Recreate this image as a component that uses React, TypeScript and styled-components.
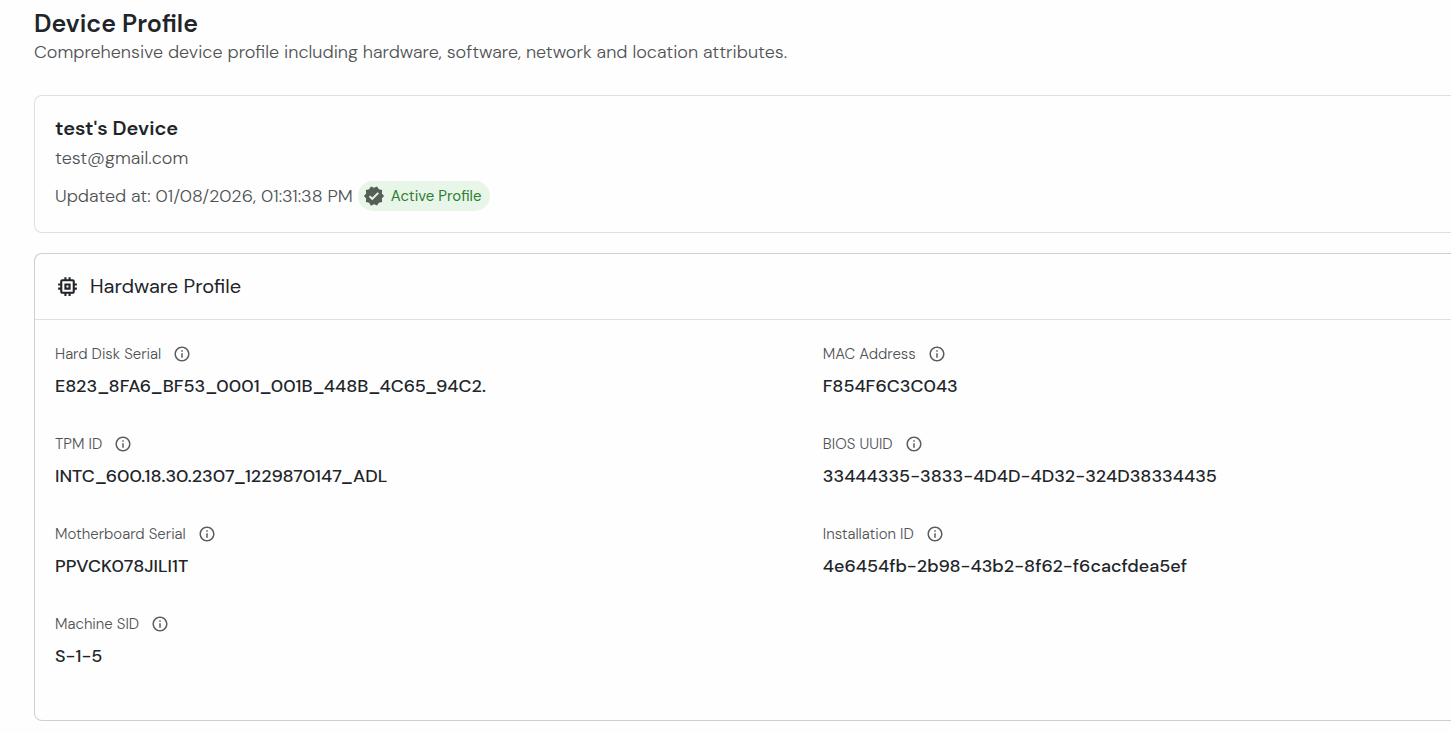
import React from "react";
import styled, { createGlobalStyle } from "styled-components";
import { MdInfoOutline, MdMemory, MdVerified } from "react-icons/md";

const GlobalStyle = createGlobalStyle`
  * { box-sizing: border-box; }
  body {
    margin: 0;
    background: #fefefe;
    color: #212529;
    font-family: "DM Sans", Inter, "Liberation Sans", sans-serif;
  }
  h1, h2, p, dl, dd { margin: 0; }
`;

const Page = styled.main`
  padding: 9px 0 12px 34px;
`;

const PageHeader = styled.header`
  display: flex;
  flex-direction: column;
  gap: 1px;
  margin-bottom: 31px;
`;

const PageTitle = styled.h1`
  font-size: 25px;
  line-height: 30px;
  font-weight: 600;
`;

const Text = styled.p`
  font-size: 18px;
  line-height: 24px;
  font-weight: 300;
  color: #505254;
`;

const Card = styled.section<{ $tone: string }>`
  border: 1px solid ${(p) => p.$tone};
  border-right: 0;
  border-radius: 8px 0 0 8px;
`;

const DeviceCard = styled(Card)`
  padding: 20px 20px 22px;
  margin-bottom: 20px;
`;

const DeviceName = styled.h2`
  font-size: 20px;
  line-height: 24px;
  font-weight: 600;
  margin-bottom: 6px;
`;

const StatusRow = styled.div`
  display: flex;
  align-items: center;
  gap: 5px;
  height: 28px;
  margin-top: 12px;
`;

const Badge = styled.span`
  display: inline-flex;
  align-items: center;
  gap: 6px;
  height: 30px;
  padding: 0 9px 0 5px;
  border-radius: 15px;
  background: #e8f5e9;
  color: #2e7d32;
  font-size: 15px;
  line-height: 20px;

  svg { color: #555f56; }
`;

const SectionHeader = styled.header`
  display: flex;
  align-items: center;
  gap: 10px;
  height: 66px;
  padding: 0 20px;
  border-bottom: 1px solid #e0e0e0;
`;

const SectionTitle = styled.h2`
  font-size: 20px;
  line-height: 25px;
  font-weight: 400;
`;

const FieldGrid = styled.dl`
  display: grid;
  grid-template-columns: 11fr 9fr;
  row-gap: 36px;
  padding: 24px 0 52px 20px;
`;

const FieldLabel = styled.dt`
  display: flex;
  align-items: center;
  gap: 12px;
  margin-bottom: 10px;
  font-size: 15px;
  line-height: 20px;
  font-weight: 300;
  color: #505254;
`;

const FieldValue = styled.dd`
  font-size: 18px;
  line-height: 24px;
  font-weight: 500;
`;

const InfoButton = styled.button`
  display: flex;
  padding: 0;
  border: 0;
  background: none;
  color: #5a5c5e;
  cursor: pointer;
`;

const fields = [
  { label: "Hard Disk Serial", value: "E823_8FA6_BF53_0001_001B_448B_4C65_94C2." },
  { label: "MAC Address", value: "F854F6C3C043" },
  { label: "TPM ID", value: "INTC_600.18.30.2307_1229870147_ADL" },
  { label: "BIOS UUID", value: "33444335-3833-4D4D-4D32-324D38334435" },
  { label: "Motherboard Serial", value: "PPVCK078JILI1T" },
  { label: "Installation ID", value: "4e6454fb-2b98-43b2-8f62-f6cacfdea5ef" },
  { label: "Machine SID", value: "S-1-5" },
];

export default function App() {
  return (
    <>
      <GlobalStyle />
      <Page>
        <PageHeader>
          <PageTitle>Device Profile</PageTitle>
          <Text>
            Comprehensive device profile including hardware, software, network and location attributes.
          </Text>
        </PageHeader>
        <DeviceCard $tone="#e0e0e0">
          <DeviceName>test's Device</DeviceName>
          <Text>test@gmail.com</Text>
          <StatusRow>
            <Text>Updated at: 01/08/2026, 01:31:38 PM</Text>
            <Badge>
              <MdVerified size={22} />
              Active Profile
            </Badge>
          </StatusRow>
        </DeviceCard>
        <Card $tone="#cfcfcf">
          <SectionHeader>
            <MdMemory size={25} />
            <SectionTitle>Hardware Profile</SectionTitle>
          </SectionHeader>
          <FieldGrid>
            {fields.map(({ label, value }) => (
              <div key={label}>
                <FieldLabel>
                  {label}
                  <InfoButton type="button" aria-label={`About ${label}`}>
                    <MdInfoOutline size={18} />
                  </InfoButton>
                </FieldLabel>
                <FieldValue>{value}</FieldValue>
              </div>
            ))}
          </FieldGrid>
        </Card>
      </Page>
    </>
  );
}
